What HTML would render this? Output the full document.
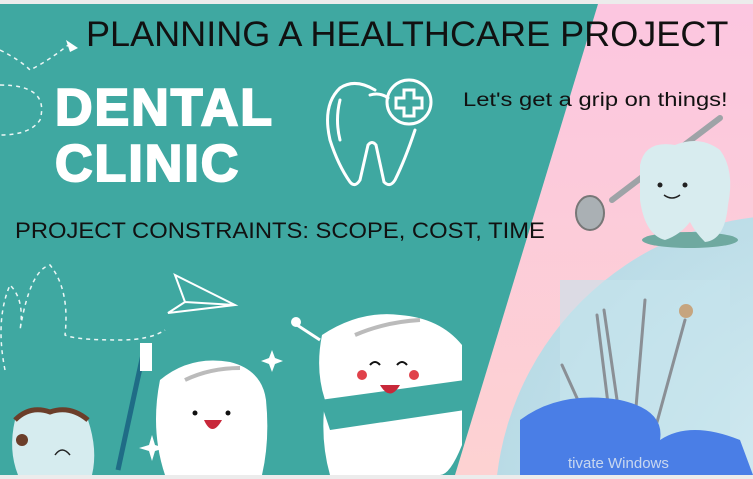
<!DOCTYPE html>
<html><head><meta charset="utf-8"><style>
*{margin:0;padding:0}
html,body{width:753px;height:479px;overflow:hidden}
body{background:#ececec;position:relative;font-family:"Liberation Sans",sans-serif}
.t{position:absolute;white-space:nowrap;transform-origin:0 0}
</style></head><body>
<svg width="753" height="479" style="position:absolute;left:0;top:0">
<defs><clipPath id="c"><rect x="0" y="4" width="753" height="471"/></clipPath>
<linearGradient id="pk" x1="0" y1="0" x2="0" y2="1"><stop offset="0" stop-color="#fcc6e0"/><stop offset="1" stop-color="#fdd2d2"/></linearGradient>
<radialGradient id="ph" cx="0.6" cy="0.5" r="0.6"><stop offset="0" stop-color="#d8eef4"/><stop offset="1" stop-color="#b9dbe6"/></radialGradient></defs>
<g clip-path="url(#c)">
<rect x="0" y="4" width="753" height="471" fill="#3fa8a1"/>
<polygon points="598,4 753,4 753,475 455,475" fill="url(#pk)"/>
<circle cx="790" cy="510" r="295" fill="url(#ph)"/>
<rect x="560" y="280" width="170" height="195" fill="#c6e4ec" opacity="0.6"/>
<g stroke="#8a8f95" stroke-width="3" stroke-linecap="round" fill="none">
<line x1="562" y1="365" x2="605" y2="460"/><line x1="597" y1="315" x2="615" y2="460"/>
<line x1="604" y1="310" x2="625" y2="455"/><line x1="645" y1="300" x2="632" y2="455"/>
<line x1="685" y1="320" x2="648" y2="455"/></g>
<circle cx="686" cy="311" r="7" fill="#c6a57f"/>
<path d="M520 420 Q560 390 620 400 Q665 410 660 440 Q690 420 740 440 L753 475 L520 475 Z" fill="#4a7ee6"/>
<line x1="720" y1="118" x2="612" y2="200" stroke="#9ea3a7" stroke-width="6" stroke-linecap="round"/>
<ellipse cx="590" cy="213" rx="14" ry="17" fill="#aab0b4" stroke="#777" stroke-width="2"/>
<ellipse cx="690" cy="240" rx="48" ry="8" fill="#6fa9a0"/>
<path d="M640 165 Q645 140 675 145 Q700 135 720 150 Q735 170 728 205 Q725 240 705 242 Q695 232 690 222 Q680 235 665 240 Q645 235 640 200 Z" fill="#d8ecef"/>
<circle cx="660" cy="185" r="2.5" fill="#222"/><circle cx="685" cy="185" r="2.5" fill="#222"/>
<path d="M664 195 Q672 201 680 195" stroke="#222" stroke-width="1.5" fill="none"/>
<g stroke="#fff" stroke-width="1.5" stroke-dasharray="4 4" fill="none" opacity="0.9">
<path d="M0 50 Q20 60 30 70 Q50 60 72 42"/>
<path d="M0 85 Q50 85 40 120 Q30 135 0 135"/>
<path d="M5 370 Q-5 320 10 285 Q25 300 20 330 Q30 270 50 265 Q70 290 65 335 Q75 340 120 340 Q150 340 165 330"/>
</g>
<polygon points="66,40 78,48 70,52" fill="#fff"/>
<path d="M175 275 L235 305 L168 313 L185 302 Z M185 302 L235 305" stroke="#fff" stroke-width="2" fill="none"/>
<g stroke="#fff" stroke-width="3" fill="none" stroke-linecap="round">
<path d="M375 90 Q355 78 340 88 Q322 105 330 140 Q338 165 350 182 Q355 188 360 180 L368 145 Q372 140 376 145 L384 182 Q390 188 395 180 Q405 160 415 130"/>
<path d="M340 100 Q335 120 340 140"/>
<circle cx="409" cy="102" r="22"/>
<path d="M404 90 h10 v8 h8 v10 h-8 v8 h-10 v-8 h-8 v-10 h8 Z"/>
<path d="M370 95 Q380 92 388 98"/></g>
<path d="M15 420 Q30 405 50 412 Q70 405 88 420 Q98 450 92 475 L18 475 Q8 450 15 420 Z" fill="#d6ecef"/>
<path d="M15 420 Q30 405 50 412 Q70 405 88 420" stroke="#6b3e2a" stroke-width="5" fill="none"/>
<circle cx="22" cy="440" r="6" fill="#6b3e2a"/>
<path d="M55 455 Q62 445 70 455" stroke="#222" stroke-width="1.5" fill="none"/>
<line x1="118" y1="470" x2="145" y2="345" stroke="#1f6c86" stroke-width="5"/>
<rect x="140" y="343" width="12" height="28" fill="#fff"/>
<path d="M160 380 Q190 355 230 362 Q262 370 266 400 Q270 440 262 475 L165 475 Q150 430 160 380 Z" fill="#fff"/>
<path d="M185 380 Q210 368 240 368" stroke="#bbb" stroke-width="4" fill="none"/>
<circle cx="195" cy="413" r="2.5" fill="#111"/><circle cx="228" cy="413" r="2.5" fill="#111"/>
<path d="M204 420 Q212 438 222 420 Z" fill="#c8283a"/>
<path d="M322 335 Q360 310 400 315 Q440 318 462 345 L462 445 Q450 475 440 475 L330 475 Q320 440 325 400 Q315 370 322 335 Z" fill="#fff"/>
<path d="M320 400 L465 380 L465 410 L330 430 Z" fill="#3fa8a1"/>
<path d="M355 335 Q385 322 420 320" stroke="#bbb" stroke-width="4" fill="none"/>
<circle cx="362" cy="375" r="5" fill="#e0414a"/><circle cx="414" cy="375" r="5" fill="#e0414a"/>
<path d="M380 385 Q390 402 400 385 Z" fill="#c8283a"/>
<path d="M370 365 q5 -6 10 0 M397 365 q5 -6 10 0" stroke="#111" stroke-width="2" fill="none"/>
<path d="M320 340 L297 325" stroke="#fff" stroke-width="3"/><circle cx="296" cy="322" r="5" fill="#fff"/>
<path d="M272 350 l3 8 8 3 -8 3 -3 8 -3 -8 -8 -3 8 -3 Z M152 435 l3 10 10 3 -10 3 -3 10 -3 -10 -10 -3 10 -3 Z" fill="#fff"/>
</g>
</svg>
<div class="t" style="left:86px;top:15px;font-size:35px;color:#111;transform:scaleX(1.03)">PLANNING A HEALTHCARE PROJECT</div>
<div class="t" style="left:55px;top:80px;font-size:52px;font-weight:bold;color:#fff;line-height:56px;letter-spacing:2px;-webkit-text-stroke:2px #fff">DENTAL<br>CLINIC</div>
<div class="t" style="left:463px;top:90px;font-size:19px;color:#111;transform:scaleX(1.25)">Let's get a grip on things!</div>
<div class="t" style="left:15px;top:218px;font-size:22px;color:#111;transform:scaleX(1.08)">PROJECT CONSTRAINTS: SCOPE, COST, TIME</div>
<div class="t" style="left:568px;top:455px;font-size:15px;color:#e8eef2;opacity:.8">tivate Windows</div>
</body></html>
